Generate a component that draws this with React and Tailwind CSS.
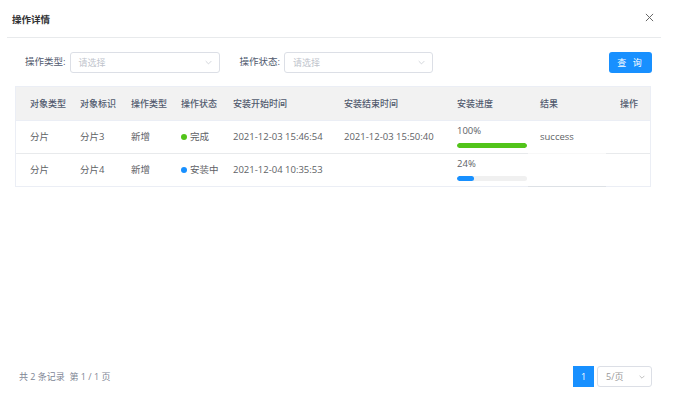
const rows = [
  {
    type: '分片',
    id: '分片3',
    op: '新增',
    status: '完成',
    dot: 'bg-[#52c41a]',
    start: '2021-12-03 15:46:54',
    end: '2021-12-03 15:50:40',
    progress: 100,
    bar: 'bg-[#52c41a]',
    result: 'success',
  },
  {
    type: '分片',
    id: '分片4',
    op: '新增',
    status: '安装中',
    dot: 'bg-[#1890ff]',
    start: '2021-12-04 10:35:53',
    end: '',
    progress: 24,
    bar: 'bg-[#1890ff]',
    result: '',
  },
];

const cols = 'grid grid-cols-[50px_51px_50px_52px_111px_113px_83px_80px_1fr] pl-[14px]';

function Chevron({ className = '' }) {
  return (
    <svg viewBox="0 0 10 6" className={className} fill="none" stroke="currentColor" strokeWidth="1">
      <path d="M1 1l4 4 4-4" />
    </svg>
  );
}

function Select({ width }) {
  return (
    <div
      className={`flex items-center justify-between h-[21px] ${width} border border-[#dcdfe6] rounded-[3px] pl-[8px] pr-[7px] bg-white`}
    >
      <span className="text-[9px] text-[#c0c4cc]">请选择</span>
      <Chevron className="w-[7px] h-[5px] text-[#c0c4cc]" />
    </div>
  );
}

export default function App() {
  return (
    <div
      className="w-[685px] h-[395px] bg-white flex flex-col text-[#606266]"
      style={{ fontFamily: '"Open Sans", "Noto Sans CJK SC", sans-serif' }}
    >
      {/* header */}
      <div className="flex items-center justify-between h-[38px] ml-[7px] mr-[24px] pl-[5px] pr-[7px] border-b border-[#e8eaec]">
        <span className="text-[9.5px] font-bold text-[#303133] mt-[3px]">操作详情</span>
        <svg viewBox="0 0 10 10" className="w-[9px] h-[9px] text-[#666] mb-[2px]" stroke="currentColor" strokeWidth="1.1">
          <path d="M1 1l8 8M9 1l-8 8" />
        </svg>
      </div>

      {/* filters */}
      <div className="flex items-center h-[21px] mt-[14px] pl-[25px] pr-[33px]">
        <span className="text-[9.5px] text-[#515a6e] mr-[4px]">操作类型:</span>
        <Select width="w-[150px]" />
        <span className="text-[9.5px] text-[#515a6e] ml-[20px] mr-[4px]">操作状态:</span>
        <Select width="w-[149px]" />
        <button className="ml-auto w-[43px] h-[21px] rounded-[3px] bg-[#1890ff] text-white text-[9px] tracking-[2px]">
          查 询
        </button>
      </div>

      {/* table */}
      <div className="mt-[13px] mx-[15px] w-[636px] border border-[#ebeef5]">
        <div className={`${cols} h-[33px] items-center bg-[#f2f2f2] text-[9px] font-medium text-[#515a6e]`}>
          <span>对象类型</span>
          <span>对象标识</span>
          <span>操作类型</span>
          <span>操作状态</span>
          <span>安装开始时间</span>
          <span>安装结束时间</span>
          <span>安装进度</span>
          <span>结果</span>
          <span>操作</span>
        </div>
        {rows.map((r, i) => (
          <div
            key={r.id}
            className={`${cols} h-[33px] items-center text-[9.5px] ${i === 0 ? 'border-t border-[#ebeef5]' : 'border-t border-[#e8eaec]'}`}
          >
            <span>{r.type}</span>
            <span>{r.id}</span>
            <span>{r.op}</span>
            <span className="flex items-center">
              <span className={`w-[6px] h-[6px] rounded-full mr-[3px] ${r.dot}`} />
              {r.status}
            </span>
            <span>{r.start}</span>
            <span>{r.end}</span>
            <div className="flex flex-col self-stretch pt-[3px]">
              <span className="leading-[14px]">{r.progress}%</span>
              <div className="mt-[5px] w-[70px] h-[5px] rounded-full bg-[#f0f0f0] overflow-hidden">
                <div className={`h-full rounded-full ${r.bar}`} style={{ width: `${r.progress}%` }} />
              </div>
            </div>
            <span className="relative self-stretch flex items-center">
              {r.result}
              <span
                className={`absolute left-[-12px] bottom-[-1px] w-[78px] h-[1px] ${i === 0 ? 'bg-[#f8f8f8]' : 'bg-[#dde1e6]'}`}
              />
            </span>
            <span />
          </div>
        ))}
      </div>

      {/* footer */}
      <div className="mt-auto mb-[8px] flex items-center justify-between pl-[19px] pr-[33px] h-[21px]">
        <span className="text-[9px] text-[#808695]">共 2 条记录&nbsp;&nbsp;第 1 / 1 页</span>
        <div className="flex items-center gap-[3px]">
          <span className="w-[21px] h-[21px] flex items-center justify-center bg-[#1890ff] text-white text-[9px]">1</span>
          <div className="flex items-center justify-between w-[55px] h-[21px] border border-[#dcdfe6] rounded-[3px] pl-[8px] pr-[6px]">
            <span className="text-[9px] text-[#999]">5/页</span>
            <Chevron className="w-[6px] h-[4px] text-[#999]" />
          </div>
        </div>
      </div>
    </div>
  );
}
